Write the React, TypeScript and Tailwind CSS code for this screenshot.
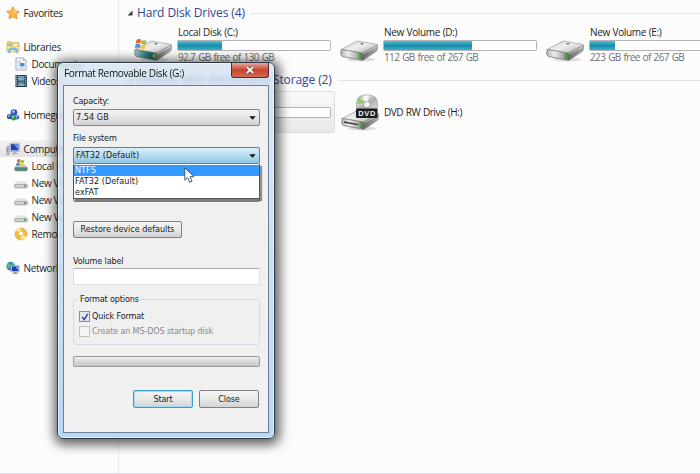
import type { ReactNode } from 'react';

const UI_FONT = "font-['Open_Sans','Noto_Sans',sans-serif]";
const DIALOG_FONT = "font-['DejaVu_Sans_Condensed','DejaVu_Sans',sans-serif]";

/* ---------- icons ---------- */

function WindowsFlag() {
  return (
    <g>
      <path d="M1 2.2c1.6-.9 3.2-.9 4.6-.1L4.9 6C3.500 5.300 2 5.300.3 6.100z" fill="#e8642c" />
      <path d="M6.300 2.400c1.500.8 3 .8 4.700 0L10.300 6.200c-1.600.8-3.100.8-4.700.1z" fill="#8cc63e" />
      <path d="M.1 6.900c1.700-.8 3.200-.8 4.600-.1L4 10.600c-1.500-.7-3-.7-4.600.1z" fill="#3f8fdc" />
      <path d="M5.400 7.100c1.500.7 3.100.7 4.700 0L9.400 11c-1.600.7-3.100.7-4.700 0z" fill="#fbc62c" />
    </g>
  );
}

function DriveIcon({ system = false, slot = false }: { system?: boolean; slot?: boolean }) {
  return (
    <svg width="39" height="23" viewBox="0 0 39 23" className="block overflow-visible">
      <defs>
        <linearGradient id="drvTop" x1="0" y1="0" x2="1" y2="1">
          <stop offset="0" stopColor="#cfcfcf" />
          <stop offset=".45" stopColor="#efefef" />
          <stop offset="1" stopColor="#a8a8a8" />
        </linearGradient>
        <linearGradient id="drvFront" x1="0" y1="0" x2="1" y2="0">
          <stop offset="0" stopColor="#b4b4b4" />
          <stop offset=".35" stopColor="#ececf2" />
          <stop offset="1" stopColor="#8a8a8a" />
        </linearGradient>
        <linearGradient id="drvSide" x1="0" y1="0" x2="1" y2="0">
          <stop offset="0" stopColor="#646464" />
          <stop offset="1" stopColor="#b0b0b0" />
        </linearGradient>
        <linearGradient id="drvTeal" x1="0" y1="0" x2="1" y2="0">
          <stop offset="0" stopColor="#a8c8c6" />
          <stop offset=".5" stopColor="#2f7f86" />
          <stop offset="1" stopColor="#173f45" />
        </linearGradient>
      </defs>
      <ellipse cx="21" cy="20.500" rx="14" ry="2" fill="#000" opacity=".12" />
      <path d="M1.200 10.500L16 2.600q1.200-.6 2.500-.4L36 5.200q1.600.4 1.200 1.700L22.500 14.800 2 11.800z" fill="url(#drvTop)" stroke="#8f8f8f" strokeWidth=".6" />
      <path d="M1 10.900q.4-.6 1.500-.4L22 14l-.3 7.200L3 17.600Q1 17 .8 15.200z" fill={system ? 'url(#drvTeal)' : 'url(#drvFront)'} stroke="#6a6a6a" strokeWidth=".7" />
      <path d="M22 14L37.300 6.300q.5 1.200 0 4.400-.2 1-1.300 1.800L23.500 21q-1 .5-1.800.2z" fill="url(#drvSide)" stroke="#6b6b6b" strokeWidth=".5" />
      <path d="M22.800 14.800L37 7.400" stroke="#e9e9e9" strokeWidth=".7" />
      <rect x="18.600" y="14.600" width="2.600" height="5" rx=".6" fill="#2c8a1c" />
      <rect x="19.200" y="15.200" width="1.200" height="3.200" fill={system ? '#b5e61d' : '#5cc73e'} />
      {slot ? (
        <path d="M3 14l14 2.600" stroke="#333" strokeWidth="1.300" />
      ) : (
        <ellipse cx="22" cy="4.700" rx="1.800" ry=".7" fill="#6b6b6b" />
      )}
      {system && (
        <g transform="translate(1.500 -1.500)">
          <WindowsFlag />
        </g>
      )}
    </svg>
  );
}

function DvdIcon() {
  return (
    <div className="relative h-[37px] w-[39px]">
      <div className="absolute top-[14px] left-0">
        <DriveIcon slot />
      </div>
      <svg width="39" height="25" viewBox="0 0 39 25" className="absolute top-0 left-0">
        <defs>
          <linearGradient id="disc" x1="0" y1="0" x2="1" y2="1">
            <stop offset="0" stopColor="#8a8a8a" />
            <stop offset=".3" stopColor="#e6e6e6" />
            <stop offset=".55" stopColor="#b0b0b0" />
            <stop offset="1" stopColor="#dadada" />
          </linearGradient>
        </defs>
        <path d="M15.500 15V9Q15.500 1 26 .8 36.500 1 36.500 9v6z" fill="url(#disc)" stroke="#8d8d8d" strokeWidth=".5" />
        <path d="M16 10q0-4 3-6.500L24 9z" fill="#7cc04a" opacity=".75" />
        <path d="M22 1.500h6l-1.500 7h-2z" fill="#fff" opacity=".8" />
        <ellipse cx="26" cy="10.500" rx="3.200" ry="3" fill="#f6f6f6" stroke="#999" strokeWidth=".7" />
        <rect x="15" y="14.500" width="21.500" height="9.500" rx="1" fill="#1c1c1c" />
        <text x="25.800" y="21.800" textAnchor="middle" fontSize="7.500" fontWeight="700" fontFamily="Liberation Sans, sans-serif" fill="#f4f4f4" textLength="17">
          DVD
        </text>
      </svg>
    </div>
  );
}

function StarIcon() {
  return (
    <svg width="14" height="14" viewBox="0 0 14 14">
      <path d="M7 .8l1.900 4.100 4.500.5-3.300 3 .9 4.500L7 10.700 3 12.900l.9-4.500-3.300-3 4.500-.5z" fill="#fdb53c" stroke="#e58a1f" strokeWidth=".8" strokeLinejoin="round" />
      <path d="M7 2.600l1.300 3H11L8 7.500z" fill="#ffe08a" />
    </svg>
  );
}

function LibrariesIcon() {
  return (
    <svg width="14" height="14" viewBox="0 0 14 14">
      <path d="M1 2.500q0-1 1-1h3l1 1h6q1 0 1 1V11H1z" fill="#e9cf72" stroke="#c9a94a" strokeWidth=".6" />
      <path d="M2.500 3.500h4v3h-4z" fill="#8fc8a4" />
      <path d="M7 4h4.500v3H7z" fill="#fff6c8" />
      <path d="M.7 6h12.600l-.6 6H1.300z" fill="#f6e6a3" stroke="#d3b65b" strokeWidth=".5" />
      <path d="M2.500 12.800V10q0-2.200 4.500-2.200T11.500 10v2.800H9.800V10.700q0-1.200-2.800-1.200t-2.800 1.200v2.100z" fill="#7cc3ec" stroke="#4f9fce" strokeWidth=".4" />
    </svg>
  );
}

function DocumentsIcon() {
  return (
    <svg width="14" height="14" viewBox="0 0 14 14">
      <path d="M2 1h7.500L12 3.500V13H2z" fill="#fdfdfd" stroke="#8a99a8" strokeWidth=".8" />
      <path d="M9.500 1v2.500H12" fill="#d8e2ec" stroke="#8a99a8" strokeWidth=".6" />
      <path d="M3.500 4h4M3.500 5.500h3" stroke="#9bb4cc" strokeWidth=".7" />
      <rect x="6" y="6" width="4.500" height="3.500" fill="#4f8fc0" />
      <path d="M3.500 7h2M3.500 8.700h2M3.500 11h7" stroke="#9bb4cc" strokeWidth=".7" />
    </svg>
  );
}

function VideosIcon() {
  return (
    <svg width="14" height="14" viewBox="0 0 14 14">
      <rect x="1.500" y="1" width="11.500" height="12" rx=".6" fill="#23303c" />
      <path d="M4 1.800h6.500v4.600H4z" fill="#5f9ccb" />
      <path d="M4 7.400h6.500V12H4z" fill="#4a86b8" />
      <path d="M4 5l3-1.500 3.500 1.800v1.100H4zM4 10.500l3-1.500 3.500 1.800V12H4z" fill="#86b0a0" />
      <path d="M2.700 1.800v11M11.800 1.800v11" stroke="#e7eef4" strokeWidth="1" strokeDasharray="1.200 1" />
    </svg>
  );
}

function HomegroupIcon() {
  return (
    <svg width="14" height="14" viewBox="0 0 14 14">
      <circle cx="8" cy="4.600" r="3.300" fill="#3557b8" />
      <circle cx="7.400" cy="3.600" r="1.400" fill="#a8c4f4" />
      <circle cx="3.600" cy="8.600" r="2.700" fill="#2b55b0" />
      <circle cx="3" cy="7.800" r="1.100" fill="#8fbdf0" />
      <circle cx="7.600" cy="9.800" r="2.600" fill="#3a9a4a" />
      <circle cx="7" cy="9" r="1" fill="#a4dd9c" />
      <circle cx="11" cy="9.200" r="2.300" fill="#3d6cc6" />
      <circle cx="10.600" cy="8.500" r=".9" fill="#a8c4f4" />
    </svg>
  );
}

function ComputerIcon() {
  return (
    <svg width="15" height="14" viewBox="0 0 15 14">
      <path d="M.8 4.500h2.200v8H.8z" fill="#c7ccd1" stroke="#7d868f" strokeWidth=".6" />
      <path d="M1.500 6v4" stroke="#4caf50" strokeWidth=".8" />
      <rect x="3.800" y="1.200" width="9.600" height="8.300" rx=".6" fill="#dfe4ea" stroke="#8b949d" strokeWidth=".6" />
      <path d="M4.800 2.200h7.600v6.200H4.800z" fill="#1f3fb5" />
      <path d="M8.500 2.200h3.900v4.500Q9.500 6 8.500 2.200z" fill="#6d92ee" />
      <path d="M7.200 9.500h3v1.500h1.500v1.200H5.700V11h1.500z" fill="#a9b0b8" />
    </svg>
  );
}

function SmallDriveIcon({ system = false }: { system?: boolean }) {
  return (
    <svg width="14" height="14" viewBox="0 0 14 14">
      <path d="M2.500 6h9L13.300 9H.7z" fill={system ? '#cdd6d6' : '#f1f1f1'} stroke="#bdbdbd" strokeWidth=".5" />
      <rect x=".6" y="8.300" width="12.800" height="3.600" rx="1.400" fill={system ? '#4e8b8d' : '#cfcfcf'} stroke="#878787" strokeWidth=".6" />
      <rect x="10" y="9.200" width="1.700" height="1.700" fill="#37a12d" />
      {system && (
        <g transform="translate(2.500 -.8) scale(.72)">
          <WindowsFlag />
        </g>
      )}
    </svg>
  );
}

function RemovableIcon() {
  return (
    <svg width="14" height="14" viewBox="0 0 14 14">
      <circle cx="7" cy="7" r="6" fill="#f2bd35" stroke="#d69a1e" strokeWidth=".6" />
      <path d="M7 7L2 3.500Q4 1 7 1zM7 7l5.500 2.500Q11 12.500 7 13z" fill="#fde9a0" />
      <circle cx="7" cy="6.500" r="2.400" fill="#fff" stroke="#cfa43c" strokeWidth=".6" />
    </svg>
  );
}

function NetworkIcon() {
  return (
    <svg width="14" height="14" viewBox="0 0 14 14">
      <circle cx="4.800" cy="5.200" r="4.400" fill="#2b82cf" />
      <path d="M2 2.500q2.500-.5 3 1.200T3 7.500Q1 6.500.9 4.500z" fill="#62bd5a" />
      <path d="M6 1.200q2.500.8 3 3L6.500 3.500z" fill="#8fd07e" />
      <rect x="5" y="4.500" width="8.200" height="6.500" rx=".5" fill="#d7dde4" stroke="#7b8794" strokeWidth=".5" />
      <path d="M5.900 5.400h6.400v4.700H5.900z" fill="#1b3bbb" />
      <path d="M9.500 5.400h2.800V9q-2-.6-2.800-3.600z" fill="#6f97f0" />
      <path d="M8 11h2.500v1.200h1.500v.9H6.500v-.9H8z" fill="#8d98a3" />
    </svg>
  );
}

function Cursor() {
  return (
    <svg width="12" height="18" viewBox="0 0 12 18">
      <path d="M.8.800v12.400l2.900-2.700 2 4.700 2.300-1-2-4.500h4z" fill="#fff" stroke="#35456b" strokeWidth=".9" strokeLinejoin="round" />
    </svg>
  );
}

/* ---------- explorer ---------- */

interface NavItem {
  icon: ReactNode;
  label: string;
  nested?: boolean;
  selected?: boolean;
}

const navGroups: NavItem[][] = [
  [{ icon: <StarIcon />, label: 'Favorites' }],
  [
    { icon: <LibrariesIcon />, label: 'Libraries' },
    { icon: <DocumentsIcon />, label: 'Documents', nested: true },
    { icon: <VideosIcon />, label: 'Videos', nested: true },
  ],
  [{ icon: <HomegroupIcon />, label: 'Homegroup' }],
  [
    { icon: <ComputerIcon />, label: 'Computer', selected: true },
    { icon: <SmallDriveIcon system />, label: 'Local Disk (C:)', nested: true },
    { icon: <SmallDriveIcon />, label: 'New Volume (D:)', nested: true },
    { icon: <SmallDriveIcon />, label: 'New Volume (E:)', nested: true },
    { icon: <SmallDriveIcon />, label: 'New Volume (F:)', nested: true },
    { icon: <RemovableIcon />, label: 'Removable Disk (G:)', nested: true },
  ],
  [{ icon: <NetworkIcon />, label: 'Network' }],
];

function Sidebar() {
  return (
    <nav className="flex w-[119px] shrink-0 flex-col gap-[17px] overflow-hidden border-r border-[#e3ebf7] pt-[4px]">
      {navGroups.map((group, i) => (
        <ul key={i}>
          {group.map((item) => (
            <li
              key={item.label}
              className={`flex h-[17px] items-center whitespace-nowrap text-[10px] leading-none tracking-[-0.350px] text-[#1e1e1e] ${
                item.nested ? 'pl-[14px]' : 'pl-[6px]'
              } ${item.selected ? 'bg-gradient-to-b from-[#f3f3f3] to-[#e2e2e2]' : ''}`}
            >
              <span className="w-[17.500px] shrink-0">{item.icon}</span>
              {item.label}
            </li>
          ))}
        </ul>
      ))}
    </nav>
  );
}

function GroupHeader({ title }: { title: string }) {
  return (
    <div className="flex h-[18px] items-center">
      <svg width="6" height="6" viewBox="0 0 6 6" className="mr-[4px] shrink-0">
        <path d="M5.500.5v5h-5z" fill="#3c3c3c" />
      </svg>
      <h2 className="text-[12px] leading-none tracking-[-0.1px] whitespace-nowrap text-[#34459b]">{title}</h2>
      <span className="ml-[6px] h-px flex-1 bg-[#e4e4e8]" />
    </div>
  );
}

function UsageBar({ used }: { used: number }) {
  return (
    <div className="h-[11px] w-[154px] rounded-[1.500px] border border-[#b4b4b4] bg-white">
      <div className="h-full bg-gradient-to-b from-[#4fc3d9] via-[#198aa9] to-[#35b5cb]" style={{ width: `${used}%` }} />
    </div>
  );
}

interface Drive {
  name: string;
  free: string;
  used: number;
  system?: boolean;
}

const drives: Drive[] = [
  { name: 'Local Disk (C:)', free: '92.7 GB free of 130 GB', used: 29, system: true },
  { name: 'New Volume (D:)', free: '112 GB free of 267 GB', used: 58 },
  { name: 'New Volume (E:)', free: '223 GB free of 267 GB', used: 16.500 },
];

function DriveTile({ drive }: { drive: Drive }) {
  return (
    <div className="flex w-[206px] shrink-0">
      <div className="w-[43px] shrink-0 pt-[13px]">
        <DriveIcon system={drive.system} />
      </div>
      <div className="text-[10px] leading-none whitespace-nowrap">
        <p className="flex h-[14px] items-center pb-[2px] pl-px tracking-[-0.350px] text-[#1e1e1e] [word-spacing:0.5px]">{drive.name}</p>
        <UsageBar used={drive.used} />
        <p className="flex h-[14px] items-center pb-[2px] pl-px tracking-[-0.650px] text-[#707070] [word-spacing:1px]">{drive.free}</p>
      </div>
    </div>
  );
}

function Explorer() {
  return (
    <div className="flex h-full border-b border-[#dcdff0] bg-[#fcfcfc]">
      <Sidebar />
      <main className="min-w-0 flex-1 overflow-hidden pt-[4px] pl-[8px]">
        <GroupHeader title="Hard Disk Drives (4)" />
        <div className="flex pt-[4px] pl-[7px]">
          {drives.map((drive) => (
            <DriveTile key={drive.name} drive={drive} />
          ))}
        </div>
        <div className="pt-[6px]">
          <GroupHeader title="Devices with Removable Storage (2)" />
        </div>
        <div className="flex pt-[2px] pl-[3px]">
          <div className="flex h-[42px] w-[205px] shrink-0 items-center justify-end rounded-[3px] border border-[#dedede] bg-gradient-to-b from-[#fafafa] to-[#e8e8e8] pr-[3px]">
            <UsageBar used={0} />
          </div>
          <div className="flex items-center pl-[6px]">
            <DvdIcon />
            <span className="pl-[4px] text-[10px] leading-none tracking-[-0.450px] whitespace-nowrap text-[#1e1e1e] [word-spacing:0.5px]">DVD RW Drive (H:)</span>
          </div>
        </div>
      </main>
    </div>
  );
}

/* ---------- format dialog ---------- */

function Arrow() {
  return (
    <svg width="7" height="4" viewBox="0 0 7 4">
      <path d="M.3.300h6.400L3.500 3.800z" fill="#111" />
    </svg>
  );
}

function Select({ value, open = false }: { value?: string; open?: boolean }) {
  return (
    <div
      className={`flex h-[17px] items-center justify-between rounded-[2px] border pr-[3px] pl-[2px] tracking-[0.050px] ${
        open
          ? 'border-[#4b84a8] bg-gradient-to-b from-[#dceef8] via-[#b5dbf0] to-[#8fc4e2]'
          : 'border-[#858585] bg-gradient-to-b from-[#f2f2f2] via-[#e6e6e6] to-[#d2d2d2]'
      }`}
    >
      <span>{value}</span>
      <Arrow />
    </div>
  );
}

function PushButton({ children, className }: { children: ReactNode; className: string }) {
  return (
    <button
      type="button"
      className={`flex items-center justify-center rounded-[2px] border bg-gradient-to-b from-[#f4f4f4] via-[#e9e9e9] to-[#d3d3d3] ${className}`}
    >
      {children}
    </button>
  );
}

function Checkbox({ label, checked = false, disabled = false }: { label: string; checked?: boolean; disabled?: boolean }) {
  return (
    <label className={`flex h-[15px] items-center gap-[2px] ${disabled ? 'text-[#8a8a8a]' : ''}`}>
      <span className={`flex size-[11px] items-center justify-center border ${disabled ? 'border-[#c2c2c2] bg-[#f4f4f4]' : 'border-[#8e8f8f] bg-[#e3e7ec]'}`}>
        {checked && (
          <svg width="8" height="8" viewBox="0 0 8 8">
            <path d="M1.200 4l2 2.600L6.800.8" fill="none" stroke="#32479c" strokeWidth="1.500" />
          </svg>
        )}
      </span>
      {label}
    </label>
  );
}

const fileSystems = ['NTFS', 'FAT32 (Default)', 'exFAT'];

function FormatDialog() {
  return (
    <div className="absolute top-[62px] left-[57px] flex h-[377px] w-[218px] flex-col rounded-[6px] border border-[#2f3843] bg-gradient-to-b from-[#d5e2f1]/80 to-[#b3d6f8]/95 px-[5px] pb-[5px] shadow-[inset_0_0_0_1px_rgba(255,255,255,0.6),1px_2px_11px_4px_rgba(0,0,0,0.6)] backdrop-blur-[2px]">
      <header className="flex h-[22px] shrink-0 justify-between">
        <h1 className={`pt-[4px] pl-px text-[10px] leading-[12px] tracking-[-0.350px] whitespace-nowrap text-[#111] ${UI_FONT}`}>Format Removable Disk (G:)</h1>
        <button
          type="button"
          className="flex h-[15px] w-[38px] items-center justify-center rounded-b-[3px] border border-t-0 border-[#5b2a26] bg-gradient-to-b from-[#e0a99d] via-[#c5442f] to-[#cf6a50]"
        >
          <svg width="10" height="8" viewBox="0 0 10 8">
            <path d="M1.800 1l6.400 6M8.200 1L1.800 7" stroke="#5a2f2f" strokeWidth="3" />
            <path d="M1.800 1l6.400 6M8.200 1L1.800 7" stroke="#fff" strokeWidth="1.800" />
          </svg>
        </button>
      </header>

      <div className={`flex-1 border border-[#6b7f95] bg-[#f0f0f0] pt-[7px] pr-[8px] pl-[9px] text-[9px] leading-none tracking-[-0.150px] whitespace-nowrap text-[#1a1a1a] ${DIALOG_FONT}`}>
        <p className="flex h-[16px] items-center">Capacity:</p>
        <Select value="7.54 GB" />
        <p className="mt-[4px] flex h-[17px] items-center">File system</p>
        <div className="relative">
          <Select value="FAT32 (Default)" open />
          <ul className="absolute top-[17px] right-0 left-0 z-10 border border-t-0 border-[#555] bg-white pt-px shadow-[2px_2px_1px_rgba(0,0,0,0.4)]">
            {fileSystems.map((fs, i) => (
              <li key={fs} className={`flex h-[11px] items-center pl-px tracking-[0.050px] ${i === 0 ? 'bg-[#3399ff] text-white' : ''}`}>
                {fs}
              </li>
            ))}
          </ul>
        </div>
        <div className="mt-[21px]">
          <Select />
        </div>
        <PushButton className="mt-[19px] h-[17px] w-[109px] border-[#808080] tracking-[-0.050px]">Restore device defaults</PushButton>
        <p className="mt-[16px] flex h-[14px] items-center">Volume label</p>
        <div className="h-[17px] border border-[#dcdfe4] border-t-[#abadb3] bg-white" />
        <fieldset className="mt-[8px] h-[52px] rounded-[3px] border border-[#d5dbe2] pl-[5px]">
          <legend className="h-[12px] px-[1px] leading-[12px]">Format options</legend>
          <div className="pt-[4px]">
            <Checkbox label="Quick Format" checked />
            <Checkbox label="Create an MS-DOS startup disk" disabled />
          </div>
        </fieldset>
        <div className="mt-[11px] h-[11px] rounded-[2px] border border-[#9b9b9b] bg-gradient-to-b from-[#efefef] via-[#d8d8d8] to-[#c8c8c8]" />
        <footer className="mt-[23px] flex justify-end gap-[6px] pr-px">
          <PushButton className="h-[18px] w-[60px] border-[#3c9cc8] shadow-[inset_0_0_0_1px_#9fdcf3]">Start</PushButton>
          <PushButton className="h-[18px] w-[60px] border-[#808080]">Close</PushButton>
        </footer>
      </div>
    </div>
  );
}

export default function App() {
  return (
    <div className={`relative h-[474px] w-[700px] overflow-hidden ${UI_FONT}`}>
      <Explorer />
      <FormatDialog />
      <div className="absolute top-[167px] left-[184px]">
        <Cursor />
      </div>
    </div>
  );
}
